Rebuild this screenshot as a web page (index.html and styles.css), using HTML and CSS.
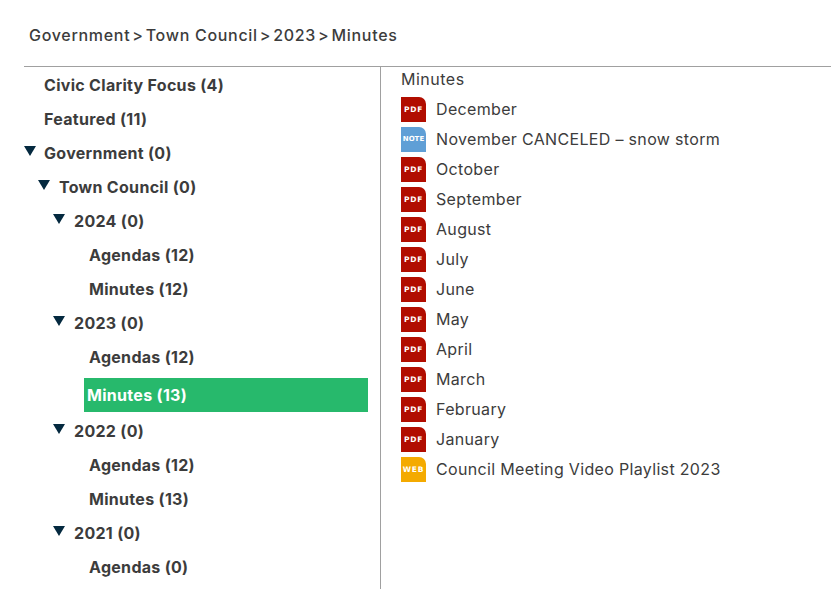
FILE: index.html
```html
<!DOCTYPE html>
<html lang="en">
<head>
    <meta charset="UTF-8">
    <title>Minutes</title>
    <link rel="stylesheet" href="styles.css">
</head>
<body>
    <div class="crumbs">
        <span>Government</span>
        <span>&gt;</span>
        <span>Town Council</span>
        <span>&gt;</span>
        <span>2023</span>
        <span>&gt;</span>
        <span>Minutes</span>
    </div>

    <div class="browser">
        <ul class="tree">
            <li class="node"><span class="label">Civic Clarity Focus (4)</span></li>
            <li class="node"><span class="label">Featured (11)</span></li>
            <li class="node open"><i class="arrow"></i><span class="label">Government (0)</span></li>
            <li class="node open lvl1"><i class="arrow"></i><span class="label">Town Council (0)</span></li>
            <li class="node open lvl2"><i class="arrow"></i><span class="label">2024 (0)</span></li>
            <li class="node lvl3"><span class="label">Agendas (12)</span></li>
            <li class="node lvl3"><span class="label">Minutes (12)</span></li>
            <li class="node open lvl2"><i class="arrow"></i><span class="label">2023 (0)</span></li>
            <li class="node lvl3"><span class="label">Agendas (12)</span></li>
            <li class="node selected"><span class="label">Minutes (13)</span></li>
            <li class="node open lvl2"><i class="arrow"></i><span class="label">2022 (0)</span></li>
            <li class="node lvl3"><span class="label">Agendas (12)</span></li>
            <li class="node lvl3"><span class="label">Minutes (13)</span></li>
            <li class="node open lvl2"><i class="arrow"></i><span class="label">2021 (0)</span></li>
            <li class="node lvl3"><span class="label">Agendas (0)</span></li>
        </ul>

        <div class="files">
            <h2>Minutes</h2>
            <ul class="file-list">
                <li><span class="badge pdf">PDF</span>December</li>
                <li><span class="badge note">NOTE</span>November CANCELED – snow storm</li>
                <li><span class="badge pdf">PDF</span>October</li>
                <li><span class="badge pdf">PDF</span>September</li>
                <li><span class="badge pdf">PDF</span>August</li>
                <li><span class="badge pdf">PDF</span>July</li>
                <li><span class="badge pdf">PDF</span>June</li>
                <li><span class="badge pdf">PDF</span>May</li>
                <li><span class="badge pdf">PDF</span>April</li>
                <li><span class="badge pdf">PDF</span>March</li>
                <li><span class="badge pdf">PDF</span>February</li>
                <li><span class="badge pdf">PDF</span>January</li>
                <li><span class="badge web">WEB</span>Council Meeting Video Playlist 2023</li>
            </ul>
        </div>
    </div>
</body>
</html>
```

FILE: styles.css
```css
html, body {
    height: 100%;
    overflow: hidden;
}

body {
    margin: 0;
    font-family: Inter, "Open Sans", sans-serif;
    font-size: 16px;
    color: #3c3c3c;
    background: #fff;
}

ul {
    list-style: none;
    margin: 0;
    padding: 0;
}

.crumbs {
    display: flex;
    gap: 2px;
    height: 16px;
    padding: 25px 0 25px 29px;
    line-height: 20px;
    font-weight: 500;
    font-size: 16px;
    letter-spacing: 0.7px;
    white-space: nowrap;
}

.browser {
    display: flex;
    margin-left: 24px;
    border-top: 1px solid #a0a0a0;
    height: 522px;
}

.tree {
    width: 356px;
    border-right: 1px solid #a0a0a0;
    flex-shrink: 0;
    padding-top: 1px;
}

.node {
    display: flex;
    align-items: center;
    height: 34px;
    padding-left: 20px;
    font-weight: 700;
    font-size: 16px;
    letter-spacing: 0.3px;
}

.node.open {
    padding-left: 0;
}

.lvl1.open {
    padding-left: 14px;
}

.lvl2.open {
    padding-left: 29px;
}

.lvl3 {
    padding-left: 65px;
}

.arrow {
    width: 0;
    height: 0;
    border-left: 6px solid transparent;
    border-right: 6px solid transparent;
    border-top: 10px solid #04293f;
    margin: 0 8px 4px 0;
}

.lvl1 .arrow,
.lvl2 .arrow {
    margin-right: 9px;
}

.selected {
    margin: 4px 12px 2px 60px;
    padding-left: 3px;
    background: #27b96c;
    color: #fff;
}

.files {
    padding: 2px 0 0 20px;
}

h2 {
    margin: 0;
    height: 25px;
    line-height: 21px;
    font-size: 16px;
    font-weight: 400;
    letter-spacing: 0.5px;
}

.file-list li {
    display: flex;
    align-items: center;
    height: 30px;
    letter-spacing: 0.33px;
}

.badge {
    width: 25px;
    height: 25px;
    margin-right: 10px;
    border-top-right-radius: 7px;
    color: #fff;
    font-family: "DejaVu Sans", sans-serif;
    font-size: 7.5px;
    font-weight: 700;
    letter-spacing: 0.8px;
    line-height: 25px;
    text-align: center;
}

.pdf {
    background: #b10d00;
}

.note {
    background: #5f9fd6;
    font-size: 7px;
    letter-spacing: 0;
}

.web {
    background: #f4aa00;
}
```
